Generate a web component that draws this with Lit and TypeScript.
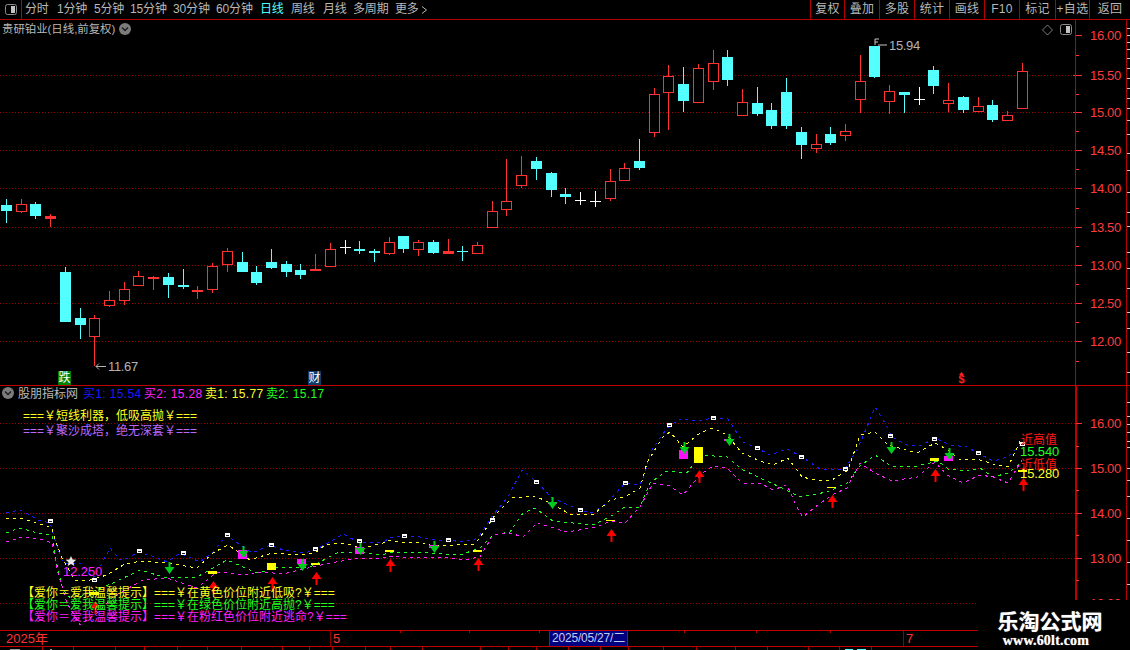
import { LitElement, html, css, svg } from "lit";
import { customElement } from "lit/decorators.js";

type Candle = [string, number, number, number, number];
const CANDLES: Candle[] = [
  ["c",199,205,211,223],["r",199,204,212,213],["c",202,204,216,219],["r",214,216,219,227],["c",267,272,322,322],
  ["c",308,318,325,339],["r",315,318,337,366],["r",291,300,306,307],["r",282,289,301,305],["r",271,276,286,286],
  ["r",276,277,279,290],["c",273,277,285,298],["c",269,285,287,289],["r",286,290,292,299],["r",263,266,290,293],
  ["r",248,251,265,272],["c",252,262,272,272],["c",266,272,283,285],["c",249,262,268,269],["c",261,264,272,277],
  ["c",264,270,275,279],["r",254,269,271,271],["r",243,249,267,267],["w",240,247,247,254],["c",241,249,251,254],
  ["c",249,251,253,262],["r",237,242,254,255],["c",236,236,249,253],["r",240,242,250,256],["c",240,242,253,254],
  ["r",239,251,254,254],["c",246,251,252,261],["r",242,245,254,254],["r",201,211,228,228],["r",159,201,210,216],
  ["r",156,175,186,188],["c",157,161,169,180],["c",172,173,190,197],["c",188,194,197,204],["w",192,200,200,205],
  ["w",191,201,201,207],["r",169,181,199,201],["r",163,168,181,181],["c",139,161,168,170],["r",88,94,133,137],
  ["r",65,76,93,130],["c",67,84,101,112],["r",64,68,103,103],["r",50,63,82,90],["c",50,57,80,86],
  ["r",89,102,116,116],["c",87,103,114,116],["c",103,110,126,129],["c",78,92,126,129],["c",127,132,145,159],
  ["r",134,144,149,153],["c",127,134,143,145],["r",124,131,136,141],["r",55,81,100,113],["c",46,46,77,78],
  ["r",85,91,102,114],["c",92,92,95,113],["w",87,99,99,105],["c",66,70,86,94],["r",83,100,104,112],
  ["c",96,97,110,113],["r",97,106,112,112],["c",100,105,120,122],["r",111,115,121,121],["r",63,71,109,109],
];
const COLORS: Record<string, string> = { r: "#ff3232", c: "#54ffff", w: "#ffffff" };

const BLUE = "6,513 20,510 30,515 38,520 50,523 55,540 63,563 80,563 93,578 100,567 110,548 120,560 128,558 138,552 152,556 167,562 180,553 200,562 213,552 227,535 240,545 252,553 270,545 283,550 305,553 315,550 330,542 343,534 358,542 383,542 390,538 403,536 420,537 435,540 448,540 463,542 475,539 480,535 493,515 508,497 522,470 537,482 552,498 580,510 593,513 607,503 625,483 640,485 645,473 650,453 667,428 680,419 697,421 713,418 728,419 737,433 743,442 757,448 770,455 787,449 802,457 820,469 845,469 857,450 867,427 875,407 885,423 892,437 907,445 920,446 935,438 950,445 967,447 978,453 993,461 1008,457 1022,443";
const YELLOW = "6,519 20,518 37,523 52,528 55,540 62,558 75,580 90,580 107,575 123,565 140,561 167,563 197,568 213,553 228,545 250,560 272,553 300,555 315,553 325,545 343,543 363,548 383,543 390,540 402,543 420,542 433,546 457,545 475,544 483,533 495,515 512,498 535,496 550,503 570,514 593,515 610,500 625,497 640,488 647,463 662,438 670,432 683,447 700,433 713,428 727,435 742,453 760,461 773,465 788,458 802,477 820,481 832,480 848,470 860,435 875,432 888,445 917,453 935,443 948,450 960,460 977,459 993,464 1008,467 1022,437";
const GREEN = "6,533 20,528 37,533 52,535 55,557 63,590 72,600 113,583 140,570 167,578 197,577 227,560 257,573 280,567 308,568 337,553 360,552 380,555 390,553 417,552 460,555 480,548 493,535 510,532 523,513 535,508 553,521 593,525 613,515 623,508 640,507 650,483 667,471 687,473 700,455 727,457 743,470 760,478 780,487 800,497 827,492 847,483 860,466 875,455 892,467 917,466 938,461 948,469 967,471 980,468 993,477 1008,473 1022,462";
const MAGENTA = "6,542 23,537 40,539 52,543 58,573 67,603 80,625 97,613 113,597 143,580 167,578 197,588 217,572 247,575 263,572 283,574 308,568 330,563 360,558 380,558 393,556 410,558 443,557 463,560 480,557 493,535 510,533 523,537 537,523 567,532 597,527 610,521 625,523 640,507 653,483 670,486 683,495 700,475 713,466 727,468 742,483 760,483 773,490 787,485 797,507 803,517 815,507 832,495 847,488 860,463 875,473 892,481 917,477 935,462 947,475 963,483 980,475 993,477 1008,483 1022,460";

const DOTS: [number, number][] = [[50,521],[94,580],[139,551],[183,553],[227,535],[271,545],[315,549],[359,541],[404,536],[448,540],[492,520],[536,482],[580,510],[625,483],[669,425],[713,418],[757,448],[801,457],[845,469],[890,436],[934,439],[978,453],[1022,444]];
const UP: [number, number][] = [[95,601],[213,581],[272,577],[316,572],[390,559],[478,558],[611,529],[699,470],[832,495],[935,469],[1023,478]];
const DOWN: [number, number][] = [[169,562],[243,546],[302,559],[360,543],[434,541],[552,497],[684,442],[729,434],[891,442],[949,448]];
const YELLOWS: number[][] = [[89,592,10,3],[208,571,9,3],[267,563,9,7],[311,563,9,2],[385,550,9,2],[473,550,9,2],[606,520,9,1],[694,447,9,16],[827,487,9,1],[930,458,9,3],[1018,470,9,2]];
const PINKS: number[][] = [[238,550,9,9],[297,559,9,5],[355,547,9,7],[429,545,9,3],[548,502,9,2],[679,450,9,9],[724,439,9,2],[944,456,9,5]];

const MAIN_TICKS: [number, string][] = [[35,"16.00"],[75,"15.50"],[112,"15.00"],[150,"14.50"],[188,"14.00"],[227,"13.50"],[265,"13.00"],[303,"12.50"],[341,"12.00"]];
const MAIN_MINOR = [55,94,131,169,208,246,284,322,361];
const SUB_TICKS: [number, string][] = [[423,"16.00"],[468,"15.00"],[513,"14.00"],[558,"13.00"],[603,"12.00"]];
const SUB_MINOR = [446,490,535,580];
const EDGE = [28,35,42,49,58,68,78,88,98,108,120,134,153,170,192,212,226,252,268,288,312,328,352,372,402,416,424,432,441,447,468,480,496,518,540,562,584];

const NAV = ["分时","1分钟","5分钟","15分钟","30分钟","60分钟","日线","周线","月线","多周期","更多"];
const ACTIONS = ["复权","叠加","多股","统计","画线","F10","标记","+自选","返回"];
const LEGEND: [string, string][] = [["buy1","买1: 15.54"],["buy2","买2: 15.28"],["sell1","卖1: 15.77"],["sell2","卖2: 15.17"]];
const DATE_TOP = [400,469,539,684,756,830];
const DATE_BOTTOM = [42,73,115,144,177,207,241,282,309,332,365,390,422,480,508,536,568,600,628,663,696,735,767,808,839,871];

const panelIcon = (x: number, y: number) => svg`
  <rect x=${x + 0.5} y=${y + 0.5} width="11" height="10" rx="2" fill="none" stroke="#8c8c8c"/>
  <rect x=${x + 6} y=${y + 2} width="4" height="7" fill="#c4c4c4"/>`;

const chevron = (cx: number, cy: number) => svg`
  <circle cx=${cx} cy=${cy} r="6" fill="#7c7c7c"/>
  <path d="M${cx - 3} ${cy - 1.5}l3 3 3-3" fill="none" stroke="#1c1c1c" stroke-width="1.4"/>`;

@customElement("app-root")
export class AppRoot extends LitElement {
  static styles = css`
    :host {
      display: block;
      position: relative;
      width: 1130px;
      height: 650px;
      overflow: hidden;
      background: #000;
      color: #b8b8b8;
      font: 12px "Liberation Sans", "Noto Sans CJK SC", sans-serif;
    }
    svg { display: block; }
    text { font-family: "Liberation Sans", "Noto Sans CJK SC", sans-serif; }
    .toolbar {
      display: flex;
      justify-content: space-between;
      height: 19px;
      border-bottom: 1px solid #b00000;
      line-height: 19px;
    }
    .left { display: flex; }
    .toggle {
      width: 21px;
      border-right: 1px solid #c00000;
    }
    .nav {
      display: grid;
      grid-template-columns: 32px 37px 36px 43px 43px 44px 31px 32px 30px 42px 26px 12px;
      padding-left: 3px;
      letter-spacing: -0.15px;
    }
    .nav .active { color: #54ffff; }
    .more { padding-top: 6px; }
    .actions {
      display: grid;
      grid-template-columns: 34px 35px 35px 35px 35px 35px 36px 34px 41px;
    }
    .actions span {
      border-left: 1px solid #b00000;
      text-align: center;
      font-size: 12px;
      letter-spacing: 0.3px;
      white-space: nowrap;
    }
    .pane { position: relative; }
    .title {
      position: absolute;
      left: 2px;
      top: 1px;
      line-height: 17px;
      font-size: 11.4px;
    }
    .corner { position: absolute; left: 0; top: 0; }
    .legend {
      position: absolute;
      left: 18px;
      top: 0;
      display: flex;
      gap: 5px;
      line-height: 17px;
      font-size: 12px;
      white-space: nowrap;
    }
    .legend .name { width: 60px; }
    .legend .buy1, .legend .buy2, .legend .sell1, .legend .sell2 {
      width: 56px;
      letter-spacing: 0.35px;
    }
    .legend .buy1 { color: #1a1aff; }
    .legend .buy2 { color: #ff20ff; }
    .legend .sell1 { color: #ffff30; }
    .legend .sell2 { color: #20ff20; }
    .slogans {
      position: absolute;
      left: 23px;
      top: 23px;
      display: flex;
      flex-direction: column;
      line-height: 15px;
      white-space: nowrap;
    }
    .slogans .gold { color: #ffff20; }
    .slogans .violet { color: #b868ff; }
    .warnings {
      position: absolute;
      left: 22px;
      top: 201px;
      display: flex;
      flex-direction: column;
      line-height: 12px;
      white-space: nowrap;
    }
    .warnings .gold { color: #ffff20; }
    .warnings .lime { color: #20ff20; }
    .warnings .pink { color: #ff20ff; }
    .dates {
      position: relative;
      display: grid;
      grid-template-columns: 330px 219px 79px 275px 227px;
      height: 15px;
      border-top: 1px solid #c00000;
      border-bottom: 1px solid #c00000;
      line-height: 15px;
      color: #ff3232;
      font-size: 13px;
    }
    .dates > span { padding-left: 2px; }
    .dates .year { padding-left: 6px; }
    .dates .cut { border-left: 1px solid #900000; }
    .dates .current {
      padding: 0;
      background: #000080;
      border-left: 1px solid #c00000;
      border-right: 1px solid #c00000;
      color: #c4ccf0;
      font-size: 12px;
      text-align: center;
      white-space: nowrap;
      letter-spacing: -0.2px;
    }
    .dates svg { position: absolute; left: 0; top: 0; }
    .foot { display: block; }
    .watermark {
      position: absolute;
      right: 0;
      bottom: 0;
      width: 152px;
      height: 50px;
      background: #000;
      display: flex;
      flex-direction: column;
      align-items: center;
      padding-right: 8px;
      box-sizing: border-box;
      color: #fff;
    }
    .wm-title {
      font: 700 21px/26px "Noto Sans CJK SC", sans-serif;
      margin-top: 7px;
      text-shadow: 0 0 1px #aaa;
    }
    .wm-site {
      font: 700 14px/16px "Liberation Serif", serif;
      letter-spacing: 0.2px;
      margin-right: 8px;
      text-shadow: 0 0 1px #aaa;
    }
  `;

  private axis(ticks: [number, string][], minor: number[], top: number, bottom: number, thick: boolean) {
    return svg`
      <rect x="1075" y=${top} width=${thick ? 2 : 1} height=${bottom - top} fill="#c00000"/>
      ${ticks.map(([y, label]) => svg`
        <rect x="1076" y=${y} width="6" height="1" fill="#ff3232"/>
        <text x="1090" y=${y + 5} fill="#ff3c3c" font-size="13" letter-spacing="-0.35">${label}</text>`)}
      ${minor.map((y) => svg`<rect x="1076" y=${y} width="3" height="1" fill="#ff3232"/>`)}
    `;
  }

  private edge(top: number, bottom: number) {
    return svg`
      <rect x="1126" y=${top} width="1" height=${bottom - top} fill="#b00000"/>
      ${EDGE.filter((y) => y >= top && y < bottom).map(
        (y) => svg`<rect x="1127" y=${y} width="3" height="1" fill="#c8c8c8"/>`)}
    `;
  }

  private grid(ys: number[]) {
    return ys.map((y) => svg`<line x1="0" x2="1075" y1=${y + 0.5} y2=${y + 0.5} stroke="#a00000" stroke-dasharray="1 2"/>`);
  }

  private candle(c: Candle, i: number) {
    const [k, hi, top, bot, lo] = c;
    const x = Math.round(6 + 14.72 * i);
    const col = COLORS[k];
    if (k === "w") {
      return svg`
        <rect x=${x} y=${hi} width="1" height=${lo - hi} fill=${col}/>
        <rect x=${x - 5} y=${top} width="11" height="1" fill=${col}/>`;
    }
    const body = bot - top <= 3 || k === "c"
      ? svg`<rect x=${x - 5} y=${top} width="11" height=${Math.max(bot - top, 1)} fill=${col}/>`
      : svg`<rect x=${x - 4.5} y=${top + 0.5} width="10" height=${bot - top - 1} fill="#000" stroke=${col}/>`;
    return svg`<rect x=${x} y=${hi} width="1" height=${lo - hi} fill=${col}/>${body}`;
  }

  private mainPane() {
    return svg`
      <svg width="1130" height="366" viewBox="0 20 1130 366">
        ${this.grid([75, 112, 150, 188, 227, 265, 303, 341])}
        ${this.axis(MAIN_TICKS, MAIN_MINOR, 20, 385, false)}
        <rect x="1073" y="75" width="2" height="1" fill="#ff3232"/>
        <rect x="1073" y="112" width="2" height="1" fill="#ff3232"/>
        ${this.edge(20, 385)}
        ${CANDLES.map((c, i) => this.candle(c, i))}
        <rect x="0" y="385" width="1130" height="1" fill="#c00000"/>

        ${chevron(125, 29)}
        <path d="M1047.5 25l5 5-5 5-5-5z" fill="none" stroke="#7c7c7c"/>
        ${panelIcon(1060, 24)}

        <path d="M875 39v6M875 39h4M875 42h3M878 45h9" fill="none" stroke="#c8c8c8"/>
        <text x="889" y="50" fill="#b4b4b4" font-size="13" letter-spacing="-0.35">15.94</text>

        <path d="M106 366.5H96M99 363.5l-3 3 3 3" fill="none" stroke="#b4b4b4"/>
        <text x="108" y="371" fill="#b4b4b4" font-size="13" letter-spacing="-0.35">11.67</text>

        <rect x="58" y="371" width="13" height="14" fill="#008000"/>
        <text x="64.5" y="382" fill="#fff" font-size="12" text-anchor="middle">跌</text>
        <rect x="308" y="371" width="13" height="14" fill="#0c3c6c"/>
        <text x="314.5" y="382" fill="#fff" font-size="12" text-anchor="middle">财</text>
        <path d="M961.5 372l2.5 3h-5z" fill="#ff2020"/>
        <text x="961.5" y="383" fill="#ff2020" font-size="11" font-weight="700" text-anchor="middle">$</text>
      </svg>`;
  }

  private subPane() {
    return svg`
      <svg width="1130" height="244" viewBox="0 386 1130 244">
        ${this.grid([423, 468, 513, 558, 603])}
        ${this.axis(SUB_TICKS, SUB_MINOR, 386, 630, true)}
        ${this.edge(386, 630)}
        <g fill="none" stroke-dasharray="3 4" shape-rendering="crispEdges">
          <polyline points=${BLUE} stroke="#1c1cff"/>
          <polyline points=${YELLOW} stroke="#ffff20"/>
          <polyline points=${GREEN} stroke="#20ff20"/>
          <polyline points=${MAGENTA} stroke="#ff20ff"/>
        </g>
        ${PINKS.map(([x, y, w, h]) => svg`<rect x=${x} y=${y} width=${w} height=${h} fill="#ff10ff"/>`)}
        ${YELLOWS.map(([x, y, w, h]) => svg`<rect x=${x} y=${y} width=${w} height=${h} fill="#ffff00"/>`)}
        ${UP.map(([x, y]) => svg`<path d="M${x + 0.5} ${y}l5 7h-4v6h-2v-6h-4z" fill="#ff0000"/>`)}
        ${DOWN.map(([x, y]) => svg`<path d="M${x - 0.5} ${y}h2v5h4l-5 7-5-7h4z" fill="#00cc20"/>`)}
        ${DOTS.map(([x, y]) => svg`
          <rect x=${x - 2} y=${y - 2} width="5" height="4" fill="#fff"/>
          <rect x=${x - 1} y=${y} width="3" height="1" fill="#223"/>`)}
        <path d="M71 556l1.6 3.4 3.7.4-2.8 2.5.8 3.7-3.3-1.9-3.3 1.9.8-3.7-2.8-2.5 3.7-.4z" fill="#e8e8e8"/>
        <text x="63" y="576" fill="#ff20ff" font-size="13" letter-spacing="-0.1">12.250</text>
        <text x="1021" y="444" fill="#ff1818" font-size="12">近高值</text>
        <text x="1020" y="456" fill="#20ff20" font-size="13" letter-spacing="-0.1">15.540</text>
        <text x="1021" y="469" fill="#ff1818" font-size="12">近低值</text>
        <text x="1020" y="478" fill="#ffff20" font-size="13" letter-spacing="-0.1">15.280</text>
      </svg>`;
  }

  render() {
    return html`
      <div class="toolbar">
        <div class="left">
          <div class="toggle">
            <svg width="21" height="19" viewBox="0 0 21 19">${panelIcon(5, 4)}</svg>
          </div>
          <div class="nav">
            ${NAV.map((n) => html`<span class=${n === "日线" ? "active" : ""}>${n}</span>`)}
            <span class="more">
              <svg width="7" height="8" viewBox="0 0 7 8"><path d="M1 0.5l4.5 3.5-4.5 3.5" fill="none" stroke="#b8b8b8"/></svg>
            </span>
          </div>
        </div>
        <div class="actions">${ACTIONS.map((a) => html`<span>${a}</span>`)}</div>
      </div>

      <div class="pane">
        ${this.mainPane()}
        <div class="title">贵研铂业(日线,前复权)</div>
      </div>

      <div class="pane">
        ${this.subPane()}
        <svg class="corner" width="18" height="17" viewBox="0 386 18 17">${chevron(8, 393)}</svg>
        <div class="legend">
          <span class="name">股朋指标网</span>
          ${LEGEND.map(([k, t]) => html`<span class=${k}>${t}</span>`)}
        </div>
        <div class="slogans">
          <span class="gold">===&#xFFE5;短线利器&#xFF0C;低吸高抛&#xFFE5;===</span>
          <span class="violet">===&#xFFE5;聚沙成塔&#xFF0C;绝无深套&#xFFE5;===</span>
        </div>
        <div class="warnings">
          <span class="gold">【爱你&#xFF1D;爱我温馨提示】===&#xFFE5;在黄色价位附近低吸?&#xFFE5;===</span>
          <span class="lime">【爱你&#xFF1D;爱我温馨提示】===&#xFFE5;在绿色价位附近高抛?&#xFFE5;===</span>
          <span class="pink">【爱你&#xFF1D;爱我温馨提示】===&#xFFE5;在粉红色价位附近逃命?&#xFFE5;===</span>
        </div>
      </div>

      <div class="dates">
        <span class="year">2025年</span>
        <span class="cut">5</span>
        <span class="current">2025/05/27/二</span>
        <span>&nbsp;</span>
        <span class="cut">7</span>
        <svg width="1130" height="15" viewBox="0 0 1130 15">
          ${DATE_TOP.map((x) => svg`<rect x=${x} y="0" width="1" height="2" fill="#c00000"/>`)}
        </svg>
      </div>
      <svg class="foot" width="1130" height="4" viewBox="0 0 1130 4">
        ${DATE_BOTTOM.map((x) => svg`<rect x=${x} y="0" width="1" height="4" fill="#b00000"/>`)}
        <rect x="845" y="2" width="8" height="2" fill="#54ffff"/>
        <rect x="857" y="2" width="9" height="2" fill="#54ffff"/>
        <rect x="10" y="2" width="10" height="2" fill="#9c9c9c"/>
        <rect x="50" y="2" width="2" height="2" fill="#9c9c9c"/>
      </svg>

      <div class="watermark">
        <div class="wm-title">乐淘公式网</div>
        <div class="wm-site">www.60lt.com</div>
      </div>
    `;
  }
}
